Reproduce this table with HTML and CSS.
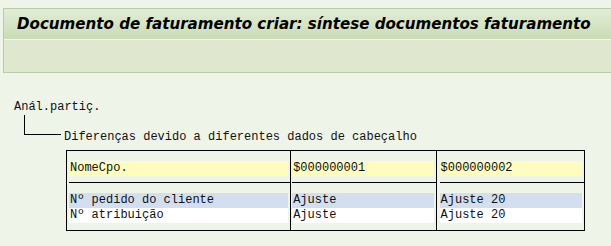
FILE: index.html
```html
<!DOCTYPE html>
<html>
<head>
<meta charset="utf-8">
<link rel="stylesheet" href="styles.css">
</head>
<body>
<div class="screen">
  <div class="header">
    <div class="title-bar"><h1 class="title">Documento de faturamento criar: síntese documentos faturamento</h1></div>
    <div class="toolbar"></div>
  </div>
  <div class="content">
    <div class="root">Anál.partiç.</div>
    <div class="branch">
      <div class="connector"></div>
      <div class="branch-label">Diferenças devido a diferentes dados de cabeçalho</div>
    </div>
    <div class="grid">
      <div class="col col-1">
        <div class="sect sect-head"><div class="cell c-yellow">NomeCpo.</div></div>
        <div class="sect sect-body">
          <div class="cell c-blue">Nº pedido do cliente</div>
          <div class="cell c-white">Nº atribuição</div>
        </div>
      </div>
      <div class="col col-2">
        <div class="sect sect-head"><div class="cell c-yellow">$000000001</div></div>
        <div class="sect sect-body">
          <div class="cell c-blue">Ajuste</div>
          <div class="cell c-white">Ajuste</div>
        </div>
      </div>
      <div class="col col-3">
        <div class="sect sect-head"><div class="cell c-yellow">$000000002</div></div>
        <div class="sect sect-body">
          <div class="cell c-blue">Ajuste 20</div>
          <div class="cell c-white">Ajuste 20</div>
        </div>
      </div>
    </div>
  </div>
</div>
</body>
</html>
```

FILE: styles.css
```css
html, body {
  margin: 0;
  padding: 0;
  background: #eff4e9;
}
.screen {
  width: 611px;
  height: 246px;
  overflow: hidden;
  padding-top: 8px;
  box-sizing: border-box;
}
.header {
  margin-left: 3px;
  border: 1px solid #b9cca8;
  border-right: none;
  background: #dfe8cf;
}
.title-bar {
  height: 30px;
  background: linear-gradient(#e3edd7, #c9dcb4);
  border-bottom: 1px solid #f2f7ec;
  display: flex;
  align-items: center;
  padding-left: 13px;
}
.title {
  margin: 0;
  font-family: "DejaVu Sans", sans-serif;
  font-weight: bold;
  font-style: italic;
  font-size: 15.1px;
  color: #000;
  white-space: nowrap;
}
.toolbar {
  height: 32px;
}
.content {
  font-family: "Courier New", "Nimbus Mono PS", "FreeMono", "Liberation Mono", monospace;
  font-size: 12px;
  color: #111;
  padding-left: 14px;
  padding-top: 27px;
}
.root {
  height: 15px;
  line-height: 15px;
}
.branch {
  display: flex;
  align-items: flex-start;
  margin-left: 10px;
}
.connector {
  width: 36px;
  height: 19px;
  border-left: 1px solid #000;
  border-bottom: 1px solid #000;
  margin-right: 3px;
}
.branch-label {
  margin-top: 15px;
  line-height: 15px;
}
.grid {
  display: flex;
  margin-left: 52px;
  margin-top: 5px;
  border: 1px solid #000;
  width: 517px;
}
.col {
  display: flex;
  flex-direction: column;
}
.col-1 { width: 222px; border-right: 1px solid #000; padding-left: 2px; }
.col-2 { width: 144px; border-right: 1px solid #000; padding-left: 1px; }
.col-3 { width: 145px; padding-left: 3px; }
.sect-head {
  padding: 10px 2px 6px 0;
  border-bottom: 1px solid #000;
}
.sect-body {
  padding: 10px 2px 7px 0;
}
.cell {
  height: 15px;
  line-height: 15px;
  padding-left: 1px;
  white-space: nowrap;
}
.c-yellow { background: #fffcc0; }
.c-blue { background: #d3deef; }
.c-white { background: #ffffff; }
```
